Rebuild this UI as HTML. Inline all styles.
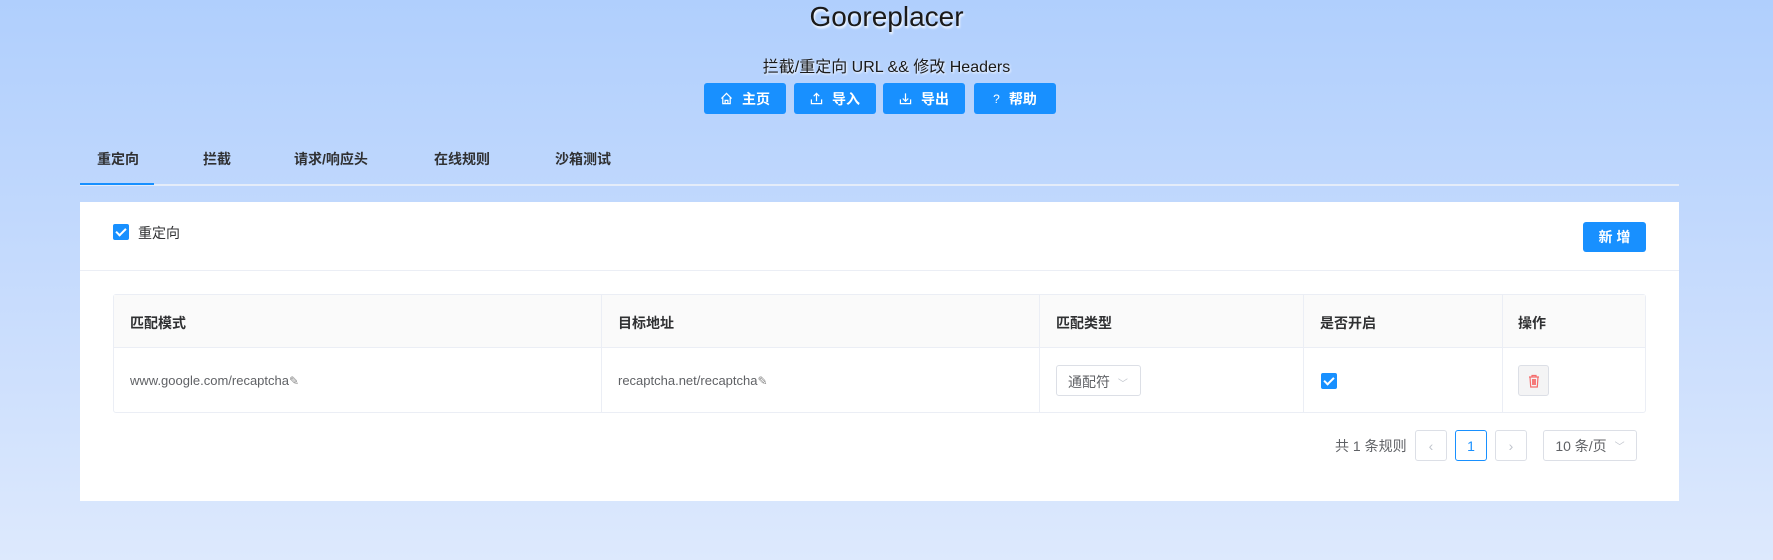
<!DOCTYPE html>
<html><head><meta charset="utf-8"><style>
*{box-sizing:border-box;margin:0;padding:0}
body{width:1773px;height:560px;overflow:hidden;background:linear-gradient(180deg,#b0cffd 0%,#c6dbfd 50%,#dde9fd 100%);font-family:"Liberation Sans","Noto Sans CJK SC",sans-serif;color:#303133;position:relative}
.a{position:absolute}
.title{left:0;width:1773px;top:1px;text-align:center;font-size:28px;color:#1a1a1a;text-shadow:1px 2px 2px #fff}
.sub{left:0;width:1773px;top:53px;text-align:center;font-size:16px;color:#1a1a1a;text-shadow:1px 1px 2px #fff}
.btn{top:83px;height:31px;width:82px;background:#1890ff;border-radius:3px;color:#fff;font-weight:bold;font-size:14px;display:flex;align-items:center;justify-content:center;gap:9px}
.tab{top:149px;font-size:14px;font-weight:bold;color:#303133}
.card{left:80px;top:202px;width:1599px;height:299px;background:#fff}
.cb{width:16px;height:16px;background:#1890ff;border-radius:2px}
.cb:after{content:"";position:absolute;left:5px;top:2px;width:4px;height:8px;border:solid #fff;border-width:0 2px 2px 0;transform:rotate(45deg)}
.th{font-size:14px;font-weight:bold;color:#303133;top:313px}
.td{font-size:13px;color:#606266;top:373px}
.pen{font-size:12px;color:#888}
.pg{border:1px solid #dcdfe6;border-radius:3px;height:31px;top:430px;display:flex;align-items:center;justify-content:center;font-size:14px;color:#c0c4cc;background:#fff}
</style></head><body>
<div class="a title">Gooreplacer</div>
<div class="a sub">拦截/重定向 URL &amp;&amp; 修改 Headers</div>
<div class="a btn" style="left:704px"><svg width="13" height="13" viewBox="0 0 14 14" fill="none" stroke="#fff" stroke-width="1.3"><path d="M1.5 7L7 1.5 12.5 7M3 5.5V12.5H11V5.5M5.5 12.5V9H8.5V12.5"/></svg>主页</div>
<div class="a btn" style="left:794px"><svg width="13" height="13" viewBox="0 0 14 14" fill="none" stroke="#fff" stroke-width="1.3"><path d="M7 10V1.5M4 4.5L7 1.5 10 4.5M1.5 8V12.5H12.5V8"/></svg>导入</div>
<div class="a btn" style="left:883px"><svg width="13" height="13" viewBox="0 0 14 14" fill="none" stroke="#fff" stroke-width="1.3"><path d="M7 1.5V10M4 7L7 10 10 7M1.5 8V12.5H12.5V8"/></svg>导出</div>
<div class="a btn" style="left:974px"><span style="font-size:12px;font-weight:normal">?</span>帮助</div>

<div class="a tab" style="left:97px">重定向</div>
<div class="a tab" style="left:203px">拦截</div>
<div class="a tab" style="left:294px">请求/响应头</div>
<div class="a tab" style="left:434px">在线规则</div>
<div class="a tab" style="left:555px">沙箱测试</div>
<div class="a" style="left:80px;top:184px;width:1599px;height:2px;background:#e4ecf9"></div>
<div class="a" style="left:80px;top:183px;width:74px;height:2px;background:#1890ff"></div>

<div class="a card"></div>
<div class="a cb" style="left:113px;top:224px"></div>
<div class="a" style="left:138px;top:223px;font-size:14px;color:#303133">重定向</div>
<div class="a" style="left:1583px;top:222px;width:63px;height:30px;background:#1890ff;border-radius:3px;color:#fff;font-weight:bold;font-size:14px;display:flex;align-items:center;justify-content:center">新 增</div>
<div class="a" style="left:80px;top:270px;width:1599px;height:1px;background:#ebeef5"></div>

<div class="a" style="left:113px;top:294px;width:1533px;height:119px;border:1px solid #ebeef5;border-radius:3px"></div>
<div class="a" style="left:114px;top:295px;width:1531px;height:53px;background:#fafafa;border-bottom:1px solid #ebeef5"></div>
<div class="a" style="left:601px;top:295px;width:1px;height:117px;background:#ebeef5"></div>
<div class="a" style="left:1039px;top:295px;width:1px;height:117px;background:#ebeef5"></div>
<div class="a" style="left:1303px;top:295px;width:1px;height:117px;background:#ebeef5"></div>
<div class="a" style="left:1502px;top:295px;width:1px;height:117px;background:#ebeef5"></div>
<div class="a th" style="left:130px">匹配模式</div>
<div class="a th" style="left:618px">目标地址</div>
<div class="a th" style="left:1056px">匹配类型</div>
<div class="a th" style="left:1320px">是否开启</div>
<div class="a th" style="left:1518px">操作</div>
<div class="a td" style="left:130px">www.google.com/recaptcha<span class="pen">✎</span></div>
<div class="a td" style="left:618px">recaptcha.net/recaptcha<span class="pen">✎</span></div>
<div class="a" style="left:1056px;top:365px;width:85px;height:31px;border:1px solid #dcdfe6;border-radius:3px;font-size:14px;color:#606266;padding:6px 0 0 11px">通配符 <span style="color:#c0c4cc;font-size:10px;margin-left:4px">﹀</span></div>
<div class="a cb" style="left:1321px;top:373px"></div>
<div class="a" style="left:1518px;top:365px;width:31px;height:31px;border:1px solid #dcdfe6;border-radius:3px;background:#f4f4f5;display:flex;align-items:center;justify-content:center"><svg width="12" height="14" viewBox="0 0 12 14" fill="none" stroke="#f56c6c" stroke-width="1.2"><path d="M1 3H11M4 3V1.5H8V3M2 3L2.7 13H9.3L10 3M4.7 5V11M6 5V11M7.3 5V11"/></svg></div>

<div class="a" style="left:1335px;top:436px;font-size:14px;color:#606266">共 1 条规则</div>
<div class="a pg" style="left:1415px;width:32px">‹</div>
<div class="a pg" style="left:1455px;width:32px;border-color:#1890ff;color:#1890ff">1</div>
<div class="a pg" style="left:1495px;width:32px">›</div>
<div class="a pg" style="left:1543px;width:94px;color:#606266">10 条/页 <span style="color:#c0c4cc;font-size:10px;margin-left:8px">﹀</span></div>
</body></html>
